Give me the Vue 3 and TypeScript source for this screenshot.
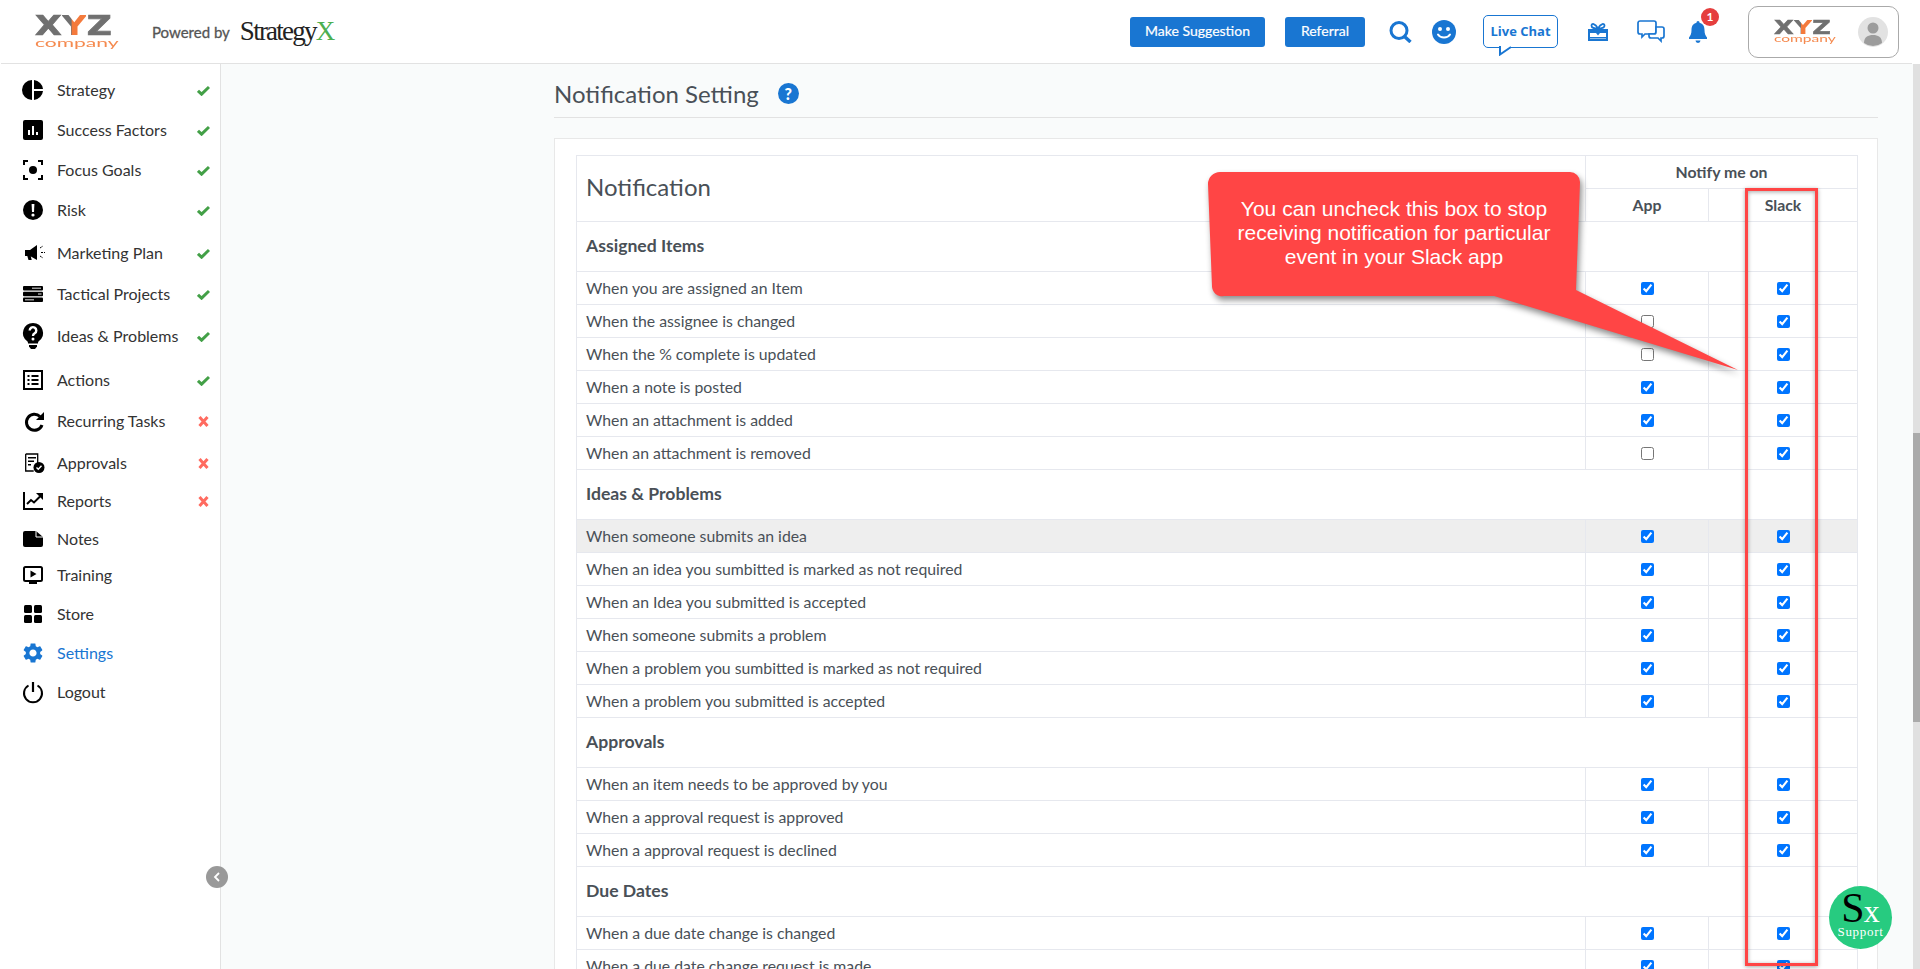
<script setup lang="ts">
type Status = 'ok' | 'no' | ''
interface NavItem { label: string; h: number; status: Status; vb?: string; icon: string; active?: boolean }
interface Row { text: string; app: boolean; slack?: boolean; hover?: boolean }
interface Group { title: string; rows: Row[] }

const nav: NavItem[] = [
  { label: 'Strategy', h: 40, status: 'ok', icon: '<path d="M9 0a10 10 0 0 0 0 20z"/><path d="M11 0a10 10 0 0 1 9 9h-9z"/><path d="M11 11h9a10 10 0 0 1-9 9z"/>' },
  { label: 'Success Factors', h: 40, status: 'ok', icon: '<rect width="20" height="20" rx="2"/><path fill="#fff" d="M5 10h2v5H5zM9 6h2v9H9zM13 12h2v3h-2z"/>' },
  { label: 'Focus Goals', h: 40, status: 'ok', icon: '<circle cx="10" cy="10" r="4"/><path fill="none" stroke="#000" stroke-width="2" d="M1 5V1h4M15 1h4v4M19 15v4h-4M5 19H1v-4"/>' },
  { label: 'Risk', h: 40, status: 'ok', icon: '<circle cx="10" cy="10" r="10"/><path fill="#fff" d="M8.600 4h2.800l-.4 8H9z"/><circle cx="10" cy="15" r="1.600" fill="#fff"/>' },
  { label: 'Marketing Plan', h: 46, status: 'ok', icon: '<path d="M2 7h5l7-5v15l-7-4H2z"/><path d="M4 12h3.500l1.200 5H5.500z"/><path fill="none" stroke="#000" stroke-width="1" stroke-dasharray="2 1" d="M17 5l3-2M18 9.500h4M17 13l3 2"/>' },
  { label: 'Tactical Projects', h: 36, status: 'ok', icon: '<rect y="2" width="20" height="4.400" rx="1"/><rect y="7.800" width="20" height="4.400" rx="1"/><rect y="13.600" width="20" height="4.400" rx="1"/><path fill="#999" d="M9 3.400h9v1.600H9zM15 9.200h3.500v1.600H15zM2 15h9v1.600H2z"/>' },
  { label: 'Ideas & Problems', h: 48, status: 'ok', vb: '0 0 20 26', icon: '<path d="M10 0a10 10 0 0 1 6 18c-.8.7-1 1.400-1 2.500H5c0-1.100-.2-1.800-1-2.500A10 10 0 0 1 10 0z"/><path d="M6 22h8v1.500L12 26H8l-2-2.500z"/><path fill="none" stroke="#fff" stroke-width="2.400" d="M6.700 7.500a3.300 3.300 0 1 1 5 2.800c-1.200.7-1.700 1.200-1.700 2.700"/><circle cx="10" cy="16" r="1.500" fill="#fff"/>' },
  { label: 'Actions', h: 40, status: 'ok', icon: '<rect x="1" y="1" width="18" height="18" fill="none" stroke="#000" stroke-width="2"/><path d="M4.500 5h2v2h-2zM8.500 5h7v2h-7zM4.500 9h2v2h-2zM8.500 9h7v2h-7zM4.500 13h2v2h-2zM8.500 13h7v2h-7z"/>' },
  { label: 'Recurring Tasks', h: 42, status: 'no', icon: '<path fill="none" stroke="#000" stroke-width="3" d="M17 5.500A8 8 0 1 0 19 14"/><path d="M21 1v8h-8z"/>' },
  { label: 'Approvals', h: 42, status: 'no', icon: '<path fill="none" stroke="#000" stroke-width="1.300" d="M2.700 1h12v10M2.700 1v17h8"/><path d="M5 4h8v1.500H5zM5 7.500h6V9H5zM5 11h3v1.500H5z"/><circle cx="16" cy="14.500" r="5.500"/><path fill="none" stroke="#fff" stroke-width="1.400" d="M13.500 14.500l1.800 1.800 3.200-3.500"/>' },
  { label: 'Reports', h: 34, status: 'no', icon: '<path fill="none" stroke="#000" stroke-width="2" d="M1 1v17h19"/><path fill="none" stroke="#000" stroke-width="2" d="M4 13l4-4 3 2.500 6-6"/><path d="M13 2h7v7z"/>' },
  { label: 'Notes', h: 42, status: '', vb: '0 0 20 16', icon: '<path d="M2 0h11l7 6v8a2 2 0 0 1-2 2H2a2 2 0 0 1-2-2V2a2 2 0 0 1 2-2z"/><path fill="none" stroke="#fff" d="M13 0v6h7"/>' },
  { label: 'Training', h: 30, status: '', icon: '<rect x="1" y="2" width="18" height="14" rx="1.500" fill="none" stroke="#000" stroke-width="2"/><path d="M7.500 5.500l6 3.500-6 3.500zM6 17h8v2H6z"/>' },
  { label: 'Store', h: 48, status: '', icon: '<rect x="1" y="1" width="8" height="8" rx="1.500"/><rect x="11" y="1" width="8" height="8" rx="1.500"/><rect x="1" y="11" width="8" height="8" rx="1.500"/><rect x="11" y="11" width="8" height="8" rx="1.500"/>' },
  { label: 'Settings', h: 30, status: '', active: true, vb: '2 2 20 20', icon: '<path fill="#1976d2" d="M19.140 12.940c.04-.3.06-.61.06-.94 0-.32-.02-.64-.07-.94l2.030-1.580c.18-.14.23-.41.12-.61l-1.920-3.320c-.12-.22-.37-.29-.59-.22l-2.390.96c-.5-.38-1.030-.7-1.620-.94l-.36-2.540c-.04-.24-.24-.41-.48-.41h-3.840c-.24 0-.43.17-.47.41l-.36 2.540c-.59.24-1.130.57-1.620.94l-2.390-.96c-.22-.08-.47 0-.59.22L2.740 8.870c-.12.21-.08.47.12.61l2.030 1.580c-.05.3-.09.63-.09.94s.02.64.07.94l-2.030 1.580c-.18.14-.23.41-.12.61l1.920 3.320c.12.22.37.29.59.22l2.390-.96c.5.38 1.030.7 1.620.94l.36 2.540c.05.24.24.41.48.41h3.840c.24 0 .44-.17.47-.41l.36-2.540c.59-.24 1.130-.56 1.620-.94l2.390.96c.22.08.47 0 .59-.22l1.920-3.320c.12-.22.07-.47-.12-.61l-2.010-1.580zM12 15.600c-1.980 0-3.600-1.620-3.600-3.600s1.620-3.600 3.600-3.600 3.600 1.620 3.600 3.600-1.620 3.600-3.600 3.600z"/>' },
  { label: 'Logout', h: 48, status: '', icon: '<path fill="none" stroke="#000" stroke-width="2" d="M5.500 3.500a9 9 0 1 0 9 0"/><path fill="none" stroke="#000" stroke-width="2.200" d="M10 0v10"/>' },
]

const groups: Group[] = [
  {
    title: 'Assigned Items',
    rows: [
      { text: 'When you are assigned an Item', app: true },
      { text: 'When the assignee is changed', app: false },
      { text: 'When the % complete is updated', app: false },
      { text: 'When a note is posted', app: true },
      { text: 'When an attachment is added', app: true },
      { text: 'When an attachment is removed', app: false },
    ],
  },
  {
    title: 'Ideas & Problems',
    rows: [
      { text: 'When someone submits an idea', app: true, hover: true },
      { text: 'When an idea you sumbitted is marked as not required', app: true },
      { text: 'When an Idea you submitted is accepted', app: true },
      { text: 'When someone submits a problem', app: true },
      { text: 'When a problem you sumbitted is marked as not required', app: true },
      { text: 'When a problem you submitted is accepted', app: true },
    ],
  },
  {
    title: 'Approvals',
    rows: [
      { text: 'When an item needs to be approved by you', app: true },
      { text: 'When a approval request is approved', app: true },
      { text: 'When a approval request is declined', app: true },
    ],
  },
  {
    title: 'Due Dates',
    rows: [
      { text: 'When a due date change is changed', app: true },
      { text: 'When a due date change request is made', app: true },
    ],
  },
]
</script>

<template>
  <div class="page">
    <header class="top">
      <div class="logo main-logo">
        <div class="logo-mark">X<span class="logo-y">Y</span>Z</div>
        <div class="logo-sub">company</div>
      </div>
      <span class="powered">Powered by</span>
      <span class="brand">Strategy<span class="brand-x">X</span></span>

      <button class="btn btn-first">Make Suggestion</button>
      <button class="btn btn-second">Referral</button>
      <svg class="ic-search" viewBox="0 0 23 22" width="23" height="22" fill="none" stroke="#1976d2">
        <circle cx="10" cy="9.500" r="8" stroke-width="3" />
        <path d="M15.500 15.500l6 5.500" stroke-width="3.400" />
      </svg>
      <svg class="ic-smile" viewBox="0 0 24 24" width="24" height="24">
        <circle cx="12" cy="12" r="12" fill="#1976d2" />
        <circle cx="8" cy="9" r="2" fill="#fff" />
        <circle cx="16" cy="9" r="2" fill="#fff" />
        <path d="M6 14.500c2.500 4 9.500 4 12 0" fill="none" stroke="#fff" stroke-width="2" stroke-linecap="round" />
      </svg>
      <div class="live-chat">
        Live Chat
        <svg class="live-tail" viewBox="0 0 20 10" width="20" height="10">
          <path d="M1 0v8.500L12 1" fill="#fff" stroke="#1976d2" stroke-width="2" />
        </svg>
      </div>
      <svg class="ic-gift" viewBox="0 0 20 18" width="20" height="18">
        <path d="M10 5.500C7 0 3.500 0 3.500 2.800 3.500 5.500 7 5.500 10 5.500 13 5.500 16.500 5.500 16.500 2.800 16.500 0 13 0 10 5.500z" fill="#fff" stroke="#1976d2" stroke-width="1.800" />
        <path d="M0 6h20v12H0zM2 10v4h16v-4zM2 15.500V16h16v-.5z" fill="#1976d2" fill-rule="evenodd" />
        <path d="M8 10l2 2.500 2-2.500z" fill="#1976d2" />
      </svg>
      <svg class="ic-chat" viewBox="0 0 28 23" width="28" height="23" fill="#fff" stroke="#1976d2" stroke-width="1.700">
        <path d="M3 1h14a2 2 0 0 1 2 2v9a2 2 0 0 1-2 2H8l-3 3v-3H3a2 2 0 0 1-2-2V3a2 2 0 0 1 2-2z" />
        <path d="M19 7h6a2 2 0 0 1 2 2v7a2 2 0 0 1-2 2h-1v3l-3-3h-7a2 2 0 0 1-2-2v-2h5a2 2 0 0 0 2-2z" />
      </svg>
      <div class="bell">
        <svg viewBox="0 0 18 22" width="18" height="22">
          <path d="M9 0c1 0 1.500.8 1.500 1.800C14 2.600 15.500 5.500 15.500 9c0 4 1 5.500 2.500 7.500V18H0v-1.500C1.500 14.500 2.500 13 2.500 9c0-3.500 1.500-6.400 5-7.200C7.500.8 8 0 9 0z" fill="#1976d2" />
          <path d="M6.500 19.500h5a2.500 2.500 0 0 1-5 0z" fill="#1976d2" />
        </svg>
        <span class="badge">1</span>
      </div>
      <div class="profile">
        <div class="logo small-logo">
          <div class="logo-mark">X<span class="logo-y">Y</span>Z</div>
          <div class="logo-sub">company</div>
        </div>
        <svg class="avatar" viewBox="0 0 30 30" width="30" height="30">
          <circle cx="15" cy="15" r="15" fill="#e2e2e2" />
          <circle cx="15" cy="11" r="5.500" fill="#9c9c9c" />
          <path d="M6 26c0-6 4-8 9-8s9 2 9 8a15 15 0 0 1-18 0z" fill="#9c9c9c" />
        </svg>
      </div>
    </header>

    <div class="body">
      <aside class="side">
        <div
          v-for="item in nav"
          :key="item.label"
          class="nav-item"
          :class="{ active: item.active }"
          :style="{ height: item.h + 'px' }"
        >
          <svg class="nav-icon" :viewBox="item.vb || '0 0 20 20'" v-html="item.icon"></svg>
          <span class="nav-label">{{ item.label }}</span>
          <svg v-if="item.status === 'ok'" class="mark" viewBox="0 0 13 11" width="13" height="11">
            <path d="M1 5.800l3.600 3.400L12 2" fill="none" stroke="#43a047" stroke-width="3" />
          </svg>
          <svg v-else-if="item.status === 'no'" class="mark" viewBox="0 0 13 11" width="13" height="11">
            <path d="M2.500 1l8 9M10.500 1l-8 9" fill="none" stroke="#ff6b60" stroke-width="3" />
          </svg>
        </div>
      </aside>

      <main class="content">
        <div class="title-row">
          <h1>Notification Setting</h1>
          <span class="help">?</span>
        </div>
        <section class="panel">
          <table class="grid">
            <colgroup>
              <col class="col-text" />
              <col class="col-app" />
              <col class="col-slack" />
            </colgroup>
            <thead>
              <tr>
                <th rowspan="2" class="head-title">Notification</th>
                <th colspan="2" class="head-cell">Notify me on</th>
              </tr>
              <tr>
                <th class="head-cell">App</th>
                <th class="head-cell">Slack</th>
              </tr>
            </thead>
            <tbody v-for="group in groups" :key="group.title">
              <tr>
                <td colspan="3" class="group-title">{{ group.title }}</td>
              </tr>
              <tr v-for="row in group.rows" :key="row.text" :class="{ hover: row.hover }">
                <td class="row-text">{{ row.text }}</td>
                <td class="row-check"><input type="checkbox" :checked="row.app" /></td>
                <td class="row-check"><input type="checkbox" :checked="row.slack !== false" /></td>
              </tr>
            </tbody>
          </table>
        </section>
      </main>
    </div>

    <!-- annotation drawn over the screenshot -->
    <div class="slack-frame"></div>
    <div class="callout">
      <svg viewBox="0 0 540 210" width="540" height="210">
        <path
          d="M12 0H362a10 10 0 0 1 10 10L368 118 530 198 286 124H16a10 10 0 0 1-12-10L0 12A12 12 0 0 1 12 0z"
          fill="#ff4545"
        />
      </svg>
      <p>You can uncheck this box to stop<br />receiving notification for particular<br />event in your Slack app</p>
    </div>

    <button class="collapse">
      <svg viewBox="0 0 8 10" width="8" height="10"><path d="M6 1L2 5l4 4" fill="none" stroke="#fff" stroke-width="1.800" /></svg>
    </button>

    <div class="support">
      <div class="support-mark"><span class="sx-s">S</span><span class="sx-x">x</span></div>
      <div class="support-label">Support</div>
    </div>

    <div class="scroll-track"><div class="scroll-thumb"></div></div>
  </div>
</template>

<style>
html, body { margin: 0; overflow: hidden; }
</style>

<style scoped>
.page {
  position: relative; height: 969px; overflow: hidden; background: #fff;
  font-family: Lato, "Liberation Sans", sans-serif; font-size: 16px; color: #333;
}

/* top bar */
.top {
  display: flex; align-items: center; height: 63px; margin: 0 8px 0 1px;
  border-bottom: 1px solid #e2e2e2; background: #fff;
}
.logo { width: 82px; flex-shrink: 0; }
.main-logo { margin-left: 34px; }
.logo-mark {
  height: 20px; font: bold 27px/20px "DejaVu Sans", sans-serif; color: #707070; white-space: nowrap;
  -webkit-text-stroke: 0.7px #707070; transform: scaleX(1.28); transform-origin: left;
}
.logo-y {
  background: linear-gradient(90deg, #707070 42%, #f47a3c 42%);
  -webkit-background-clip: text; background-clip: text; color: transparent; -webkit-text-stroke: 0;
}
.logo-sub {
  margin-top: 2px; font: 12px/9px Lato, sans-serif; color: #f58a4f; white-space: nowrap;
  transform: scaleX(1.75); transform-origin: left;
}
.small-logo { zoom: 0.74; }
.powered { margin-left: 35px; font-size: 15px; color: #555; -webkit-text-stroke: 0.3px #555; }
.brand {
  margin-left: 10px; font: 27px "Liberation Serif", serif; color: #222; letter-spacing: -1.750px;
}
.brand-x { color: #4caf50; }
.btn {
  height: 30px; padding: 0 0 2px; border: 0; border-radius: 3px; background: #1976d2; color: #fff;
  font: 14px Lato, sans-serif; -webkit-text-stroke: 0.2px #fff;
}
.btn-first { width: 135px; margin-left: auto; }
.btn-second { width: 80px; margin-left: 20px; }
.ic-search { margin-left: 24px; flex-shrink: 0; }
.ic-smile { margin-left: 20px; flex-shrink: 0; }
.live-chat {
  position: relative; box-sizing: border-box; width: 75px; height: 33px; margin-left: 27px;
  border: 1.500px solid #1976d2; border-radius: 5px; color: #1976d2;
  font: bold 13px/30px "Open Sans", sans-serif; text-align: center; white-space: nowrap;
}
.live-tail { position: absolute; left: 15px; top: 30px; }
.ic-gift { margin-left: 30px; flex-shrink: 0; }
.ic-chat { margin-left: 29px; flex-shrink: 0; }
.bell { position: relative; height: 22px; margin-left: 24px; }
.badge {
  position: absolute; left: 12px; top: -13px; width: 18px; height: 18px; border-radius: 50%;
  background: #e53e3e; color: #fff; font: bold 12px/18px Lato, sans-serif; text-align: center;
}
.profile {
  display: flex; align-items: center; box-sizing: border-box; width: 151px; height: 52px;
  margin: 0 13px 0 41px; padding: 0 10px 0 25px; border: 1px solid #aaa; border-radius: 10px;
  justify-content: space-between;
}

.body { display: flex; height: 905px; }

/* sidebar */
.side { box-sizing: border-box; width: 221px; flex-shrink: 0; padding-top: 6px; border-right: 1px solid #e2e2e2; }
.nav-item { display: flex; align-items: center; gap: 14px; padding: 0 10px 0 23px; color: #333; white-space: nowrap; }
.nav-item.active { color: #1976d2; }
.nav-icon { width: 20px; height: 26px; flex-shrink: 0; overflow: visible; }
.nav-label { padding-bottom: 2px; }
.mark { margin-left: auto; }

/* content */
.content { flex: 1; padding: 0 42px 0 333px; background: #f9fbfb; min-width: 0; }
.title-row { display: flex; align-items: center; box-sizing: border-box; height: 54px; padding-top: 5px; border-bottom: 1px solid #e2e2e2; }
.title-row h1 { margin: 0; font: 400 24px Lato, sans-serif; color: #495057; }
.help {
  width: 21px; height: 21px; margin-left: 19px; border-radius: 50%; background: #1976d2; color: #fff;
  font: 900 16px/21px Lato, sans-serif; text-align: center;
}
.panel { margin-top: 20px; padding: 16px 19px 0 21px; border: 1px solid #e8e8e8; background: #fff; }
.grid { width: 100%; border-collapse: collapse; table-layout: fixed; color: #495057; }
.grid th, .grid td { box-sizing: border-box; border: 1px solid #e6e8ee; padding: 0; }
.col-app { width: 123px; }
.col-slack { width: 149px; }
.head-title { height: 66px; padding: 0 0 4px 9px !important; font: 400 24px Lato, sans-serif; text-align: left; }
.head-cell { height: 33px; padding-bottom: 2px !important; font: 700 15.800px Lato, sans-serif; text-align: center; }
.group-title { height: 50px; padding: 0 0 2px 9px !important; font: 700 17.600px Lato, sans-serif; }
.row-text { height: 33px; padding: 0 0 2px 9px !important; font: 15.800px Lato, sans-serif; }
.row-check { text-align: center; line-height: 0; }
.row-check input { width: 13px; height: 13px; margin: 0; }
.hover td { background: #eee; }

/* annotation */
.slack-frame {
  position: absolute; left: 1745px; top: 188px; box-sizing: border-box; width: 73px; height: 778px;
  border: 3px solid #ff4545; box-shadow: 0 1px 4px rgba(0, 0, 0, 0.35), inset 0 1px 4px rgba(0, 0, 0, 0.35);
}
.callout { position: absolute; left: 1208px; top: 172px; width: 540px; height: 210px; }
.callout svg { display: block; filter: drop-shadow(2px 4px 3px rgba(0, 0, 0, 0.45)); }
.callout p {
  position: absolute; left: 0; top: 25px; width: 372px; margin: 0; color: #fff; text-align: center;
  font: 21px/24px "Liberation Sans", sans-serif;
}
.collapse {
  position: absolute; left: 206px; top: 866px; display: flex; align-items: center; justify-content: center;
  width: 22px; height: 22px; padding: 0; border: 0; border-radius: 50%; background: #999;
}
.support {
  position: absolute; left: 1829px; top: 886px; width: 63px; height: 63px; border-radius: 50%;
  background: #27cb80; text-align: center; font-family: "Liberation Serif", serif;
}
.support-mark { height: 44px; white-space: nowrap; line-height: 44px; }
.sx-s { font-size: 42px; color: #000; }
.sx-x { margin-left: -1px; font-size: 32px; color: #fff; }
.support-label { margin-top: -4px; font-size: 13px; line-height: 12px; color: #fff; letter-spacing: 0.700px; }
.scroll-track { position: absolute; left: 1913px; top: 64px; width: 7px; height: 905px; background: #e0e0e0; }
.scroll-thumb { height: 289px; margin-top: 369px; background: #aaa; }
</style>
